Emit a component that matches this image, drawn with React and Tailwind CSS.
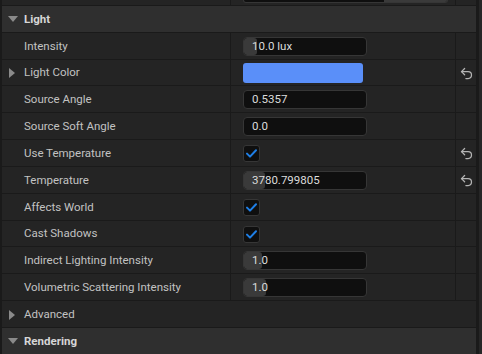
import React from 'react';
import { Undo2 } from 'lucide-react';

const rows = [
  { label: 'Intensity', type: 'num', value: '10.0 lux', fill: 13 },
  { label: 'Light Color', type: 'color', expand: true, reset: true },
  { label: 'Source Angle', type: 'num', value: '0.5357', fill: 0 },
  { label: 'Source Soft Angle', type: 'num', value: '0.0', fill: 0 },
  { label: 'Use Temperature', type: 'check', reset: true },
  { label: 'Temperature', type: 'num', value: '3780.799805', fill: 21, reset: true },
  { label: 'Affects World', type: 'check' },
  { label: 'Cast Shadows', type: 'check' },
  { label: 'Indirect Lighting Intensity', type: 'num', value: '1.0', fill: 18 },
  { label: 'Volumetric Scattering Intensity', type: 'num', value: '1.0', fill: 22 },
];

const TriDown = () => (
  <svg width="10" height="6" viewBox="0 0 10 6" className="ml-[6px] mr-[6px]">
    <path d="M0 0h10L5 6z" fill="#8a8a8a" />
  </svg>
);

const TriRight = () => (
  <svg width="6" height="10" viewBox="0 0 6 10" className="ml-[7px] mr-[9px]">
    <path d="M0 0l6 5-6 5z" fill="#8a8a8a" />
  </svg>
);

const NumBox = ({ value, fill }) => (
  <div className="relative w-[124px] h-[19px] rounded-[4px] bg-[#0f0f0f] border border-[#363636] overflow-hidden">
    {fill > 0 && (
      <div className="absolute left-0 top-0 bottom-0 bg-[#3a3a3a] rounded-[3px]" style={{ width: fill }} />
    )}
    <span className="relative block pl-[8px] leading-[17px] text-[11.5px] text-[#dcdcdc]">{value}</span>
  </div>
);

const Check = () => (
  <div className="w-[17px] h-[17px] rounded-[3px] bg-[#0f0f0f] border border-[#363636] flex items-center justify-center">
    <svg width="11" height="9" viewBox="0 0 11 9">
      <path d="M1 4.6l3 3L10 1.2" fill="none" stroke="#1f7fe6" strokeWidth="2" strokeLinecap="round" strokeLinejoin="round" />
    </svg>
  </div>
);

const Row = ({ row }) => (
  <div className="flex h-[27px] border-t border-[#1a1a1a] bg-[#242424]">
    <div className="w-[228px] flex items-center pt-[1px]">
      {row.expand ? <TriRight /> : <span className="w-[22px]" />}
      <span className="text-[11.5px] text-[#c2c2c2]">{row.label}</span>
    </div>
    <div className="w-px bg-[#1a1a1a]" />
    <div className="w-[224px] flex items-center pl-[12px] pt-[1px]">
      {row.type === 'num' && <NumBox value={row.value} fill={row.fill} />}
      {row.type === 'color' && <div className="w-[120px] h-[20px] rounded-[3px] bg-[#5a8ff9]" />}
      {row.type === 'check' && <Check />}
    </div>
    <div className="w-px bg-[#1a1a1a]" />
    <div className="flex-1 flex items-center justify-center pt-[1px]">
      {row.reset && <Undo2 size={15} strokeWidth={2} className="text-[#b4b4b4]" />}
    </div>
  </div>
);

export default function App() {
  return (
    <div className="w-[482px] h-[354px] bg-[#1a1a1a] flex overflow-hidden font-['Roboto','Liberation_Sans',sans-serif]">
      <div className="w-[476px] pl-[2px] flex flex-col">
        {/* tail of the row above */}
        <div className="flex h-[5px] bg-[#242424]">
          <div className="w-[228px]" />
          <div className="w-px bg-[#1a1a1a]" />
          <div className="w-[224px] pl-[12px]">
            <div className="w-[205px] h-[3px] flex rounded-b-[3px] border-b border-x border-[#363636] bg-[#0f0f0f] overflow-hidden">
              <div className="w-[140px]" />
              <div className="flex-1 bg-[#3a3a3a]" />
            </div>
          </div>
          <div className="w-px bg-[#1a1a1a]" />
        </div>

        <div className="flex items-center h-[27px] border-t border-[#1a1a1a] bg-[#2f2f2f] pt-[1px]">
          <TriDown />
          <span className="text-[11.5px] font-bold text-[#d6d6d6]">Light</span>
        </div>

        {rows.map((row) => (
          <Row key={row.label} row={row} />
        ))}

        <div className="flex items-center h-[27px] border-t border-[#1a1a1a] bg-[#242424] pt-[1px]">
          <TriRight />
          <span className="text-[11.5px] text-[#c2c2c2]">Advanced</span>
        </div>

        <div className="flex items-center h-[27px] shrink-0 border-t border-[#1a1a1a] bg-[#2f2f2f] pt-[1px]">
          <TriDown />
          <span className="text-[11.5px] font-bold text-[#d6d6d6]">Rendering</span>
        </div>
      </div>
      <div className="flex-1 flex justify-end">
        <div className="w-[3px] bg-[#262626]" />
      </div>
    </div>
  );
}
